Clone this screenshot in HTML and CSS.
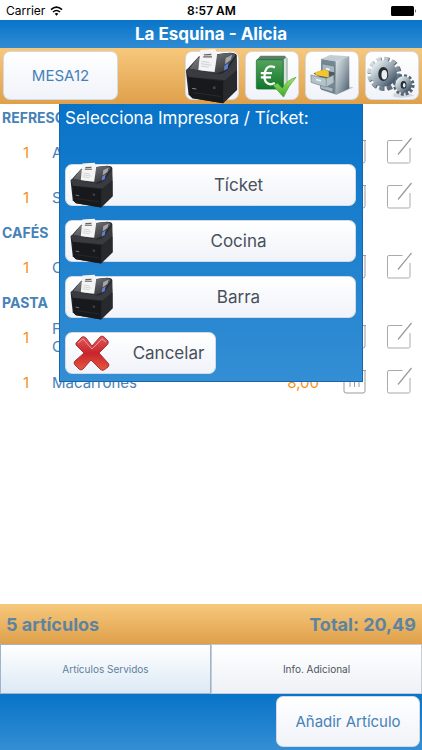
FILE: index.html
```html
<!DOCTYPE html>
<html lang="es">
<head>
  <meta charset="utf-8">
  <meta name="viewport" content="width=device-width, initial-scale=1">
  <title>La Esquina - Alicia</title>
  <link rel="stylesheet" href="styles.css">
</head>
<body>
  <!-- shared icons -->
  <svg class="defs" width="0" height="0" aria-hidden="true">
    <defs>
      <linearGradient id="lid" x1="0" y1="0" x2="1" y2="1">
        <stop offset="0" stop-color="#88898d"/>
        <stop offset="1" stop-color="#2b2c30"/>
      </linearGradient>
      <linearGradient id="steel" x1="0" y1="0" x2="1" y2="1">
        <stop offset="0" stop-color="#e3eaee"/>
        <stop offset="0.5" stop-color="#9aa8b1"/>
        <stop offset="1" stop-color="#46586a"/>
      </linearGradient>
      <linearGradient id="green" x1="0" y1="0" x2="0" y2="1">
        <stop offset="0" stop-color="#55a35c"/>
        <stop offset="1" stop-color="#11772a"/>
      </linearGradient>
      <linearGradient id="lime" x1="0" y1="0" x2="0" y2="1">
        <stop offset="0" stop-color="#a4e868"/>
        <stop offset="1" stop-color="#3ba62a"/>
      </linearGradient>
      <linearGradient id="red" x1="0" y1="0" x2="0" y2="1">
        <stop offset="0" stop-color="#e2595c"/>
        <stop offset="0.5" stop-color="#c8242b"/>
        <stop offset="1" stop-color="#e8583f"/>
      </linearGradient>
      <symbol id="printer" viewBox="18 2 164 172">
        <path d="M60 27 L145 17 Q172 14 176 24 L177 130 L134 172 L40 156 L28 145 L20 72 L32 58 Z" fill="#222327"/>
        <path d="M56 32 L140 18 Q165 15 172 24 L138 72 L115 80 L30 66 Z" fill="url(#lid)"/>
        <path d="M64 8 L110 5 L116 20 L108 76 L58 70 Z" fill="#f4f4f5"/>
        <path d="M75 23 L98 22 M73 29 L100 29" stroke="#666" stroke-width="4"/>
        <path d="M68 43 L92 47 M66 50 L98 55 M66 57 L90 61" stroke="#bbb" stroke-width="2"/>
        <path d="M142 33 L162 23 L158 38 L140 52 Z" fill="#a5a7ab"/>
        <path d="M138 57 L151 48 L148 66 L137 71 Z" fill="#5c80d5"/>
        <path d="M20 72 Q22 62 34 66 L118 82 Q134 82 148 67 L174 27 L176 70 L143 101 L29 91 Z" fill="#3a3b40"/>
        <path d="M28 92 L135 105 L134 172 L40 156 L32 148 Z" fill="#18191c"/>
        <path d="M135 105 L177 70 L177 130 L134 172 Z" fill="#28292d"/>
        <path d="M39 126 L52 128" stroke="#888" stroke-width="3"/>
        <path d="M42 139 L127 151" stroke="#2a2b2f" stroke-width="3"/>
        <rect x="103" y="120" width="8" height="8" fill="#44454a"/>
      </symbol>
      <symbol id="trash" viewBox="0 0 26 28">
        <path d="M1 3.5 H25 M3 4 V24 Q3 26 5 26 H22 Q24 26 24 24 V4 M9 10 V20 M13.500 10 V20 M18 10 V20" fill="none" stroke="#9b9b9f"/>
      </symbol>
      <symbol id="edit" viewBox="0 0 26 28">
        <path d="M16.500 3.500 H3 Q1.500 3.500 1.500 5 V24.500 Q1.500 26 3 26 H22.500 Q24 26 24 24.500 V11" fill="none" stroke="#aaaaae"/>
        <path d="M12 17.500 L25.500 1" fill="none" stroke="#99999d" stroke-width="1.200"/>
      </symbol>
    </defs>
  </svg>

  <div class="status">
    <span class="carrier">Carrier
      <svg width="13" height="10" viewBox="0 0 13 10">
        <path d="M1 3.600 Q6.500 -1.200 12 3.600 M3 6 Q6.500 3 10 6" fill="none" stroke="#000" stroke-width="1.600"/>
        <path d="M4.700 7.700 Q6.500 6.200 8.300 7.700 L6.500 9.700 Z"/>
      </svg>
    </span>
    <span class="clock">8:57 AM</span>
    <span class="battery">
      <svg width="26" height="10" viewBox="0 0 26 10">
        <rect x="0" y="0" width="23" height="10" rx="1.500"/>
        <path d="M24 3 Q25.500 5 24 7 Z"/>
      </svg>
    </span>
  </div>

  <header class="title">
    <h1>La Esquina - Alicia</h1>
  </header>

  <nav class="toolbar">
    <button class="btn table-btn" type="button">MESA12</button>
    <div class="tools">
      <button class="btn tool" type="button" aria-label="Imprimir">
        <svg class="tool-printer"><use href="#printer"/></svg>
      </button>
      <button class="btn tool" type="button" aria-label="Cobrar">
        <svg class="tool-icon" viewBox="0 0 160 150">
          <path d="M32 25 L44 12 H120 L128 20 V98 L116 117 Z" fill="#5b7f6a"/>
          <path d="M116 25 L126 14 V99 L116 116 Z" fill="#d7e2dc"/>
          <rect x="31" y="24" width="84" height="92" rx="4" fill="url(#green)" stroke="#0d6926" stroke-width="2"/>
          <path d="M89 48 Q66 38 59 60 Q53 81 61 94 Q72 106 89 97 M45 66 H80 M45 79 H77" fill="none" stroke="#fff" stroke-width="7"/>
          <path d="M83 104 L98 98 L112 113 Q128 87 155 79 Q132 104 116 141 Z" fill="url(#lime)" stroke="#3c9a2d" stroke-width="2"/>
        </svg>
      </button>
      <button class="btn tool" type="button" aria-label="Archivo">
        <svg class="tool-icon" viewBox="0 0 160 150">
          <path d="M90 134 L148 111 L130 108 Z" fill="#c5c9cb"/>
          <path d="M46 22 L74 9 L134 13 L92 30 Z" fill="#c3ced4"/>
          <path d="M46 22 L92 30 V133 L46 118 Z" fill="#758790"/>
          <path d="M92 30 L134 13 V114 L92 134 Z" fill="url(#steel)"/>
          <path d="M49 37 L88 44 V66 L49 57 Z M44 103 L83 112 V126 L44 114 Z" fill="#a8b8c0" stroke="#5c6d76" stroke-width="2"/>
          <path d="M22 67 L50 56 L88 64 V88 L62 90 Z" fill="#4c5a62"/>
          <path d="M25 64 L56 55 L70 61 V80 L32 73 Z" fill="#f5c62c"/>
          <path d="M14 72 L62 82 L86 72 V96 L62 110 L15 95 Z" fill="#b4c2c9" stroke="#6e7f88" stroke-width="2"/>
          <path d="M30 86 L46 90 M61 52 L73 55" stroke="#eef3f5" stroke-width="5"/>
          <path d="M62 83 V109" stroke="#72838c" stroke-width="2"/>
        </svg>
      </button>
      <button class="btn tool" type="button" aria-label="Ajustes">
        <svg class="tool-icon" viewBox="0 0 160 150">
          <path d="M84 130 Q118 117 150 136 Q120 147 84 140 Z" fill="#d5d7d9"/>
          <circle cx="57" cy="69" r="43" fill="none" stroke="#5f6d77" stroke-width="20" stroke-dasharray="13 9.500"/>
          <circle cx="54" cy="67" r="43" fill="none" stroke="url(#steel)" stroke-width="18" stroke-dasharray="13 9.500"/>
          <circle cx="54" cy="67" r="28" fill="none" stroke="url(#steel)" stroke-width="26"/>
          <ellipse cx="53" cy="69" rx="16" ry="22" fill="#222d35"/>
          <ellipse cx="56" cy="71" rx="9" ry="15" fill="#e9edef"/>
          <circle cx="117" cy="103" r="26" fill="none" stroke="#526375" stroke-width="15" stroke-dasharray="8 5.600"/>
          <circle cx="116" cy="102" r="17" fill="none" stroke="url(#steel)" stroke-width="18"/>
          <ellipse cx="116" cy="103" rx="9" ry="12" fill="#252e36"/>
          <ellipse cx="118" cy="104" rx="4" ry="7" fill="#eef1f2"/>
        </svg>
      </button>
    </div>
  </nav>

  <main class="content">
    <table class="order">
      <tbody>
        <tr class="group"><th colspan="5">REFRESCOS</th></tr>
        <tr>
          <td class="qty">1</td><td class="name">Agua</td><td class="price">1,50</td>
          <td class="action"><button type="button" aria-label="Borrar"><svg><use href="#trash"/></svg></button></td>
          <td class="action"><button type="button" aria-label="Editar"><svg><use href="#edit"/></svg></button></td>
        </tr>
        <tr>
          <td class="qty">1</td><td class="name">Sprite</td><td class="price">2,00</td>
          <td class="action"><button type="button" aria-label="Borrar"><svg><use href="#trash"/></svg></button></td>
          <td class="action"><button type="button" aria-label="Editar"><svg><use href="#edit"/></svg></button></td>
        </tr>
        <tr class="group"><th colspan="5">CAFÉS</th></tr>
        <tr>
          <td class="qty">1</td><td class="name">Cortado</td><td class="price">1,20</td>
          <td class="action"><button type="button" aria-label="Borrar"><svg><use href="#trash"/></svg></button></td>
          <td class="action"><button type="button" aria-label="Editar"><svg><use href="#edit"/></svg></button></td>
        </tr>
        <tr class="group"><th colspan="5">PASTA</th></tr>
        <tr>
          <td class="qty">1</td><td class="name">Fetuccini<br>Carbonara</td><td class="price">7,79</td>
          <td class="action"><button type="button" aria-label="Borrar"><svg><use href="#trash"/></svg></button></td>
          <td class="action"><button type="button" aria-label="Editar"><svg><use href="#edit"/></svg></button></td>
        </tr>
        <tr>
          <td class="qty">1</td><td class="name">Macarrones</td><td class="price">8,00</td>
          <td class="action"><button type="button" aria-label="Borrar"><svg><use href="#trash"/></svg></button></td>
          <td class="action"><button type="button" aria-label="Editar"><svg><use href="#edit"/></svg></button></td>
        </tr>
      </tbody>
    </table>

    <div class="dialog" role="dialog" aria-labelledby="dialogTitle">
      <h2 id="dialogTitle">Selecciona Impresora / Tícket:</h2>
      <button class="btn option" type="button"><svg><use href="#printer"/></svg><span>Tícket</span></button>
      <button class="btn option" type="button"><svg><use href="#printer"/></svg><span>Cocina</span></button>
      <button class="btn option" type="button"><svg><use href="#printer"/></svg><span>Barra</span></button>
      <button class="btn option cancel" type="button">
        <svg viewBox="0 0 44 44">
          <path d="M6 12 L12 6 Q14 5 16 7 L22 15 L30 6 Q32 4 34 6 L38 10 Q39 12 37 14 L29 22 L38 32 Q40 34 38 36 L34 39 Q32 40 30 38 L21 29 L13 38 Q11 40 9 38 L5 34 Q3 32 5 30 L14 22 L6 14 Z" fill="url(#red)" stroke="#a93436"/>
          <path d="M8 12 L13 8 L22 18 L32 8 L36 11" fill="none" stroke="#ef9a98"/>
        </svg>
        <span>Cancelar</span>
      </button>
    </div>
  </main>

  <section class="summary">
    <span>5 artículos</span>
    <span>Total: 20,49</span>
  </section>

  <div class="tabs">
    <button class="tab active" type="button">Artículos Servidos</button>
    <button class="tab" type="button">Info. Adicional</button>
  </div>

  <footer class="footer">
    <button class="btn add-btn" type="button">Añadir Artículo</button>
  </footer>
</body>
</html>
```

FILE: styles.css
```css
* {
  box-sizing: border-box;
}

body {
  display: flex;
  flex-direction: column;
  min-height: 100vh;
  margin: 0;
  background: #fff;
  font-family: Inter, "Liberation Sans", sans-serif;
  font-size: 15px;
  color: #4682b8;
}

button {
  margin: 0;
  padding: 0;
  border: none;
  background: none;
  font: inherit;
  color: inherit;
  cursor: pointer;
}

svg {
  display: block;
}

.defs {
  position: absolute;
}

/* status bar */
.status {
  display: grid;
  grid-template-columns: 1fr auto 1fr;
  align-items: center;
  height: 20px;
  padding: 1px 5px 0 6px;
  font-size: 12px;
  color: #000;
}

.carrier {
  display: flex;
  align-items: center;
  gap: 5px;
}

.clock {
  font-weight: 600;
}

.battery {
  justify-self: end;
}

/* title and toolbar */
.title {
  height: 28px;
  background: linear-gradient(#0874c9, #308cd3);
  color: #fff;
  text-align: center;
}

.title h1 {
  margin: 0;
  font-size: 17px;
  line-height: 29px;
  font-weight: 700;
}

.toolbar {
  display: flex;
  justify-content: space-between;
  align-items: flex-start;
  height: 56px;
  padding: 3px;
  background: linear-gradient(#f7c87c, #dfa04b);
}

.btn {
  border: 1px solid #d3dae3;
  border-radius: 7px;
  background: linear-gradient(#fff, #f0f3f9);
}

.table-btn {
  width: 115px;
  height: 49px;
}

.tools {
  display: flex;
  gap: 6px;
}

.tool {
  display: flex;
  justify-content: center;
  align-items: center;
  width: 54px;
  height: 49px;
}

.tool svg {
  flex: none;
}

.tool-icon {
  width: 52px;
  height: 48px;
}

.tool-printer {
  width: 54px;
  height: 56px;
}

/* order list */
.content {
  position: relative;
  flex: 1;
}

.order {
  width: 100%;
  border-collapse: collapse;
}

.order td,
.order th {
  padding: 0;
}

.order th {
  height: 26px;
  padding-left: 2px;
  font-size: 14px;
  text-align: left;
}

.order td {
  height: 45px;
  line-height: 18px;
}

.order .group ~ .group th {
  height: 25px;
}

.order .qty {
  width: 52px;
  text-align: center;
  color: #f39221;
}

.order .price {
  padding-right: 13px;
  text-align: right;
  color: #f39221;
}

.order .action {
  width: 45px;
  padding-left: 9px;
}

.action svg {
  width: 26px;
  height: 28px;
}

/* printer dialog */
.dialog {
  position: absolute;
  top: 0;
  left: 50%;
  display: flex;
  flex-direction: column;
  gap: 14px;
  width: 304px;
  margin-left: -152px;
  padding: 0 6px 7px 5px;
  border: 1px solid #1566ac;
  border-top: none;
  background: linear-gradient(#0873c8, #338ed4);
}

.dialog h2 {
  margin: 0 0 18px;
  font-size: 17px;
  line-height: 28px;
  font-weight: 400;
  color: #fff;
}

.option {
  display: flex;
  align-items: center;
  height: 42px;
  padding-left: 4px;
  font-size: 17px;
  color: #48505b;
}

.option svg {
  flex: none;
  width: 44px;
  height: 46px;
}

.option span {
  flex: 1;
  padding-left: 8px;
}

.cancel {
  width: 151px;
}

/* bottom bars */
.summary {
  display: flex;
  justify-content: space-between;
  align-items: center;
  height: 40px;
  padding: 0 6px;
  background: linear-gradient(#f7c87c, #dfa04b);
  font-size: 18px;
  font-weight: 700;
  color: #5b84a2;
}

.tabs {
  display: flex;
}

.tab {
  flex: 1;
  height: 50px;
  border: 1px solid #c5ccd6;
  background: linear-gradient(#fff, #eef1f6);
  font-size: 10px;
  color: #4d5461;
}

.tab.active {
  border-color: #9fb4c8;
  background: linear-gradient(#fff, #dce9f5);
  color: #5f7f9e;
}

.footer {
  display: flex;
  justify-content: flex-end;
  padding: 2px 2px 3px;
  background: linear-gradient(#0873c8, #348ed4);
}

.add-btn {
  width: 144px;
  height: 51px;
}
```
